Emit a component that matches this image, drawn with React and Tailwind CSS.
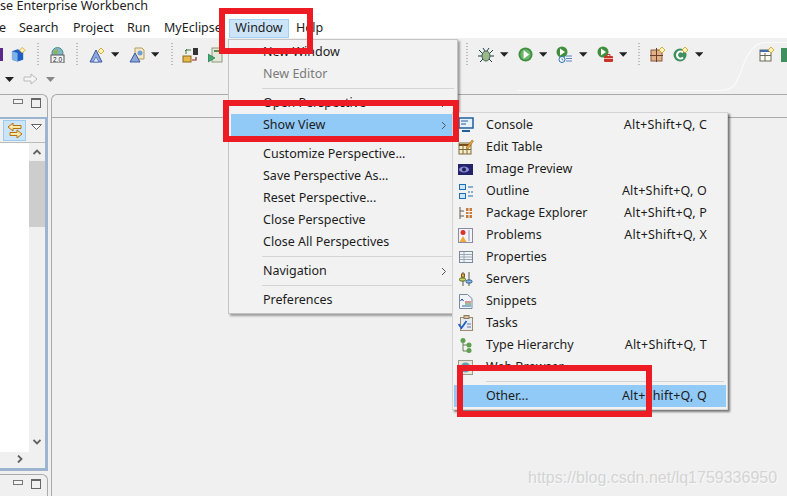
import React from 'react';

const Caret = ({ className = '', color = '#222' }) => (
  <svg width="9" height="5" viewBox="0 0 9 5" className={className}><path d="M0 0h9L4.5 5z" fill={color} /></svg>
);

const Dots = ({ className = '' }) => (
  <div className={`w-[2px] h-[24px] ${className}`} style={{ backgroundImage: 'linear-gradient(#bbb 50%, transparent 50%)', backgroundSize: '2px 3px' }} />
);

const PlayIcon = ({ size = 15 }) => (
  <svg width={size} height={size} viewBox="0 0 16 16">
    <circle cx="8" cy="8" r="7.5" fill="#3f8f3f" />
    <circle cx="8" cy="8" r="5.5" fill="#6cb56c" />
    <path d="M6 3.5L12 8l-6 4.5z" fill="#fff" />
  </svg>
);

const Star = ({ x = 11, y = 3 }) => (
  <path d={`M${x} ${y - 3}l3 3-3 3-3-3z`} fill="#fff4b8" stroke="#c99a1c" strokeWidth="0.8" />
);

const MountainIcon = () => (
  <svg width="17" height="16" viewBox="0 0 17 16">
    <path d="M1 15L7 3l6 12z" fill="#8fa7d8" stroke="#3a5aa5" />
    <path d="M4 15l3-5 3 5z" fill="#dfe7f7" stroke="#3a5aa5" strokeWidth="0.6" />
    <Star x={12} y={4} />
  </svg>
);

const MountainDocIcon = () => (
  <svg width="17" height="16" viewBox="0 0 17 16">
    <path d="M6 1h7l2 2v9H6z" fill="#f4e8c8" stroke="#b59a5a" />
    <circle cx="11" cy="6" r="2.5" fill="#6f9fd8" />
    <path d="M1 15L6 6l5 9z" fill="#8fa7d8" stroke="#3a5aa5" />
  </svg>
);

const icons = {
  cube: (
    <svg width="16" height="15" viewBox="0 0 16 15">
      <path d="M1 4l6-2 6 2v9l-6 2-6-2z" fill="#1f5fc4" />
      <path d="M1 4l6 2v9l-6-2z" fill="#7fb2e8" />
      <Star x={12} y={3} />
    </svg>
  ),
  globe: (
    <svg width="15" height="16" viewBox="0 0 15 16">
      <circle cx="7.5" cy="6" r="5.5" fill="#7fb6c8" stroke="#4f8a8a" />
      <path d="M3 4l4-2 2 3-4 3z" fill="#8cb45c" />
      <rect x="1" y="8" width="13" height="8" fill="#f4f4f4" stroke="#555" />
      <text x="7.5" y="14.5" fontSize="6.5" textAnchor="middle" fill="#222" fontFamily="Liberation Sans, sans-serif">2.0</text>
    </svg>
  ),
  deploy: (
    <svg width="17" height="16" viewBox="0 0 17 16">
      <rect x="11" y="1" width="5" height="7" fill="#333" />
      <path d="M4 7V3h5M5 2L3 4" fill="none" stroke="#3a7a3a" />
      <rect x="1" y="9" width="8" height="6" fill="#e8b84c" stroke="#8a6a1c" />
      <path d="M10 13h4v-3" fill="none" stroke="#8a2a1a" strokeWidth="1.2" />
    </svg>
  ),
  server: (
    <svg width="15" height="16" viewBox="0 0 15 16">
      <rect x="4" y="1" width="10" height="14" fill="#e4e8d8" stroke="#8a9a7a" />
      <rect x="6" y="3" width="6" height="2" fill="#5a8a4a" />
      <path d="M0 7l7 4-7 4z" fill="#3fa86f" stroke="#1f6a4a" strokeWidth="0.6" />
    </svg>
  ),
  bug: (
    <svg width="16" height="16" viewBox="0 0 16 16">
      <path d="M1 3l4 4M15 3l-4 4M0 9h4M12 9h4M2 15l3-3M14 15l-3-3M5 1l2 3M11 1L9 4" stroke="#1f3f3f" strokeWidth="1" />
      <ellipse cx="8" cy="9" rx="4" ry="5" fill="#9ab88a" stroke="#3f5f4f" />
    </svg>
  ),
  historyRun: (
    <svg width="17" height="17" viewBox="0 0 17 17">
      <circle cx="6" cy="6" r="5.5" fill="#3f8f3f" />
      <path d="M4 2.5L9 6l-5 3.5z" fill="#fff" />
      <circle cx="6" cy="13.5" r="3" fill="#fff" stroke="#1f6fb0" />
      <path d="M6 12v2h1.5" stroke="#1f6fb0" fill="none" strokeWidth="0.7" />
      <path d="M10 10h6M10 12.500h6M10 15h6" stroke="#5f86c4" />
    </svg>
  ),
  toolRun: (
    <svg width="17" height="17" viewBox="0 0 17 17">
      <circle cx="6" cy="6" r="5.5" fill="#3f8f3f" />
      <path d="M4 2.500L9 6l-5 3.500z" fill="#fff" />
      <rect x="7" y="10" width="9" height="6" rx="1" fill="#c8342c" />
      <path d="M10 10V8.500h3V10" fill="none" stroke="#c8342c" />
      <path d="M7 12.500h9" stroke="#f4b4a4" />
    </svg>
  ),
  newBox: (
    <svg width="16" height="15" viewBox="0 0 16 15">
      <rect x="1" y="3" width="11" height="11" fill="#dfb08a" stroke="#8a5a3a" />
      <path d="M6.500 1v14M0 8.500h13" stroke="#6a3f2a" />
      <Star x={12} y={3} />
    </svg>
  ),
  newC: (
    <svg width="16" height="15" viewBox="0 0 16 15">
      <circle cx="7" cy="8" r="6.500" fill="#3f8f5f" />
      <path d="M10 5.500A3.500 3.500 0 1 0 10 10.500" fill="none" stroke="#fff" strokeWidth="2" />
      <Star x={12} y={3} />
    </svg>
  ),
  table: (
    <svg width="16" height="15" viewBox="0 0 16 15">
      <rect x="1" y="3" width="11" height="11" fill="#fbfbf4" stroke="#6a6a5a" />
      <path d="M1 4h11" stroke="#3f6fb0" strokeWidth="2" />
      <path d="M1 8.500h11M6 6v8" stroke="#6a6a5a" />
      <Star x={12} y={3} />
    </svg>
  ),
};

const viewIcons = {
  console: (
    <svg width="16" height="16" viewBox="0 0 16 16">
      <rect x="1" y="1" width="14" height="10" fill="#e8f0f8" stroke="#1f5f9f" strokeWidth="1.5" />
      <path d="M3 4h7M3 7h5" stroke="#1f5f9f" />
      <path d="M4 14h8" stroke="#1f5f9f" strokeWidth="2" />
    </svg>
  ),
  editTable: (
    <svg width="16" height="16" viewBox="0 0 16 16">
      <rect x="1" y="4" width="12" height="11" fill="#f6ecc8" stroke="#7a6a3a" />
      <path d="M1 6h12" stroke="#7a4a1a" strokeWidth="2" />
      <path d="M1 10.500h12M5 6v9M9 6v9" stroke="#7a6a3a" />
      <path d="M8 9l6-8 1.500 1L10 10z" fill="#e8a83c" stroke="#8a5a1a" strokeWidth="0.5" />
    </svg>
  ),
  image: (
    <svg width="15" height="11" viewBox="0 0 15 11">
      <rect width="15" height="11" fill="#23236b" />
      <ellipse cx="6" cy="5.500" rx="5" ry="3" fill="#8c8cd8" />
      <circle cx="6" cy="5.500" r="2" fill="#20204f" />
    </svg>
  ),
  outline: (
    <svg width="14" height="15" viewBox="0 0 14 15">
      <rect x="0.500" y="0.500" width="6" height="5" fill="#cfe4f6" stroke="#1f6fb0" />
      <rect x="0.500" y="9.500" width="6" height="5" fill="#cfe4f6" stroke="#1f6fb0" />
      <path d="M9 3h5M9 8h2M12 8h2M9 12h5" stroke="#1f6fb0" />
    </svg>
  ),
  pkg: (
    <svg width="14" height="14" viewBox="0 0 14 14">
      <path d="M1 1v12M1 5h4M1 10h4" stroke="#5f5f4f" />
      <rect x="7" y="2" width="6" height="10" fill="#c87a3c" />
      <path d="M7 5.500h6M7 8.500h6M10 2v10" stroke="#f4f4f4" />
    </svg>
  ),
  problems: (
    <svg width="15" height="15" viewBox="0 0 15 15">
      <rect x="0.500" y="0.500" width="14" height="14" fill="#f4f4f8" stroke="#8a8aa0" />
      <circle cx="5" cy="4.500" r="2.500" fill="#d8342c" />
      <path d="M5 8l3.500 6h-7z" fill="#eea83c" />
      <path d="M11 2v11" stroke="#c4c4d8" strokeWidth="2" />
    </svg>
  ),
  properties: (
    <svg width="14" height="12" viewBox="0 0 14 12">
      <rect x="0.500" y="0.500" width="13" height="11" fill="#f4f4f4" stroke="#7a8a9a" />
      <path d="M1 3.500h12M1 6h12M1 8.500h12M5 1v10" stroke="#9aa8b8" />
    </svg>
  ),
  servers: (
    <svg width="14" height="14" viewBox="0 0 14 14">
      <path d="M4 0v14M10 0v14" stroke="#5a5a4a" />
      <rect x="0.500" y="6" width="6" height="3" rx="1.500" fill="#c8d858" stroke="#5a6a2a" />
      <rect x="7" y="8" width="6" height="3" rx="1.500" fill="#8ab8e8" stroke="#2a5a8a" />
      <rect x="2.500" y="2" width="3" height="3" fill="#e8b84c" stroke="#7a5a1a" />
    </svg>
  ),
  snippets: (
    <svg width="14" height="15" viewBox="0 0 14 15">
      <path d="M0.500 0.500h8l4.500 4v10h-12.500z" fill="#f0f4fa" stroke="#7a8aa0" />
      <path d="M3 5l-1.500 2M3 5l1.500 2" stroke="#1f3f8f" />
      <path d="M6 8h6" stroke="#c8342c" />
      <path d="M6 10h6" stroke="#3f8f3f" />
      <path d="M3 12h9" stroke="#1f6fb0" />
    </svg>
  ),
  tasks: (
    <svg width="15" height="16" viewBox="0 0 15 16">
      <rect x="2.500" y="2.500" width="12" height="13" fill="#e4ebf4" stroke="#a08a6a" />
      <rect x="6" y="0.500" width="5" height="3" fill="#d4c0a4" stroke="#8a7a5a" />
      <path d="M0.500 9l3 4 5-7" fill="none" stroke="#1f5fc4" strokeWidth="1.800" />
      <path d="M9 9h4M9 12h4" stroke="#6a7a9a" />
    </svg>
  ),
  hierarchy: (
    <svg width="12" height="15" viewBox="0 0 12 15">
      <path d="M3 3v10h5M3 7h5" stroke="#6a7a5a" fill="none" />
      <circle cx="3" cy="2.500" r="2.500" fill="#5fa04f" />
      <circle cx="9" cy="7" r="2.500" fill="#5fa04f" />
      <circle cx="9" cy="12.500" r="2.500" fill="#5fa04f" />
    </svg>
  ),
  web: (
    <svg width="15" height="15" viewBox="0 0 15 15">
      <rect x="0.500" y="0.500" width="14" height="14" fill="#e8e8d8" stroke="#9a9a8a" />
      <circle cx="7.500" cy="7.500" r="5" fill="#5f9fc4" />
      <path d="M4 5l4-1 1 3-3 3z" fill="#5f9f5f" />
    </svg>
  ),
};

const windowItems = [
  { label: 'New Window' },
  { label: 'New Editor', disabled: true },
  { sep: true },
  { label: 'Open Perspective', arrow: true },
  { label: 'Show View', arrow: true, active: true },
  { sep: true, faint: true },
  { label: 'Customize Perspective...' },
  { label: 'Save Perspective As...' },
  { label: 'Reset Perspective...' },
  { label: 'Close Perspective' },
  { label: 'Close All Perspectives' },
  { sep: true },
  { label: 'Navigation', arrow: true },
  { sep: true },
  { label: 'Preferences' },
];

const viewItems = [
  { icon: 'console', label: 'Console', key: 'Alt+Shift+Q, C' },
  { icon: 'editTable', label: 'Edit Table' },
  { icon: 'image', label: 'Image Preview' },
  { icon: 'outline', label: 'Outline', key: 'Alt+Shift+Q, O' },
  { icon: 'pkg', label: 'Package Explorer', key: 'Alt+Shift+Q, P' },
  { icon: 'problems', label: 'Problems', key: 'Alt+Shift+Q, X' },
  { icon: 'properties', label: 'Properties' },
  { icon: 'servers', label: 'Servers' },
  { icon: 'snippets', label: 'Snippets' },
  { icon: 'tasks', label: 'Tasks' },
  { icon: 'hierarchy', label: 'Type Hierarchy', key: 'Alt+Shift+Q, T' },
  { icon: 'web', label: 'Web Browser' },
];

const Chevron = () => (
  <svg width="6" height="9" viewBox="0 0 6 9" className="absolute right-[8px] top-[7px]">
    <path d="M1 1l3.500 3.500L1 8" fill="none" stroke="#555" strokeWidth="1" />
  </svg>
);

const PanelControls = () => (
  <div className="flex items-start">
    <div className="w-[10px] h-[5px] border border-[#777] bg-[#f4f4f4] mt-[1px]" />
    <div className="w-[10px] h-[10px] border border-[#666] border-t-[2px] ml-[8px]" />
  </div>
);

export default function App() {
  return (
    <div className="relative w-[787px] h-[496px] overflow-hidden flex flex-col bg-[#f0f0f0] text-[12.5px] text-[#1c1c1c] font-['Noto_Sans',sans-serif]">
      {/* Title + menu bar */}
      <div className="h-[15px] bg-white text-[12.6px] leading-[12px] whitespace-nowrap text-[#222]">
        <span className="block">se Enterprise Workbench</span>
      </div>
      <div className="h-[23px] bg-white flex items-center whitespace-nowrap pt-[4px]">
        <span className="w-[20px] -ml-[1px]">e</span>
        <span className="w-[54px]">Search</span>
        <span className="w-[54px]">Project</span>
        <span className="w-[37px]">Run</span>
        <span className="w-[65px]">MyEclipse</span>
        <span className="w-[60px] h-[19px] bg-[#cce4f7] border border-[#a3d2f5] flex items-center justify-center">Window</span>
        <span className="ml-[7px]">Help</span>
      </div>

      {/* Toolbar */}
      <div className="relative h-[56px] shrink-0 bg-[#f0f0f0]">
        <svg width="270" height="56" viewBox="0 0 270 56" className="absolute right-0 top-0">
          <path d="M0 52.500h200c14 0 18-4 22-14 4-10 10-34 26-34h22" fill="none" stroke="#fafafa" strokeWidth="1.200" />
        </svg>
        <div className="relative flex items-center h-[28px] pt-[5px]">
          <div className="w-[3px] h-[13px] bg-[#5a2a8a] mr-[8px]" />
          {icons.cube}
          <Dots className="ml-[11px]" />
          <div className="ml-[11px]">{icons.globe}</div>
          <Dots className="ml-[11px]" />
          <div className="ml-[11px]"><MountainIcon /></div>
          <Caret className="ml-[5px]" />
          <div className="ml-[10px]"><MountainDocIcon /></div>
          <Caret className="ml-[5px]" />
          <Dots className="ml-[12px]" />
          <div className="ml-[9px]">{icons.deploy}</div>
          <div className="ml-[9px]">{icons.server}</div>
          <Dots className="ml-[243px]" />
          <div className="ml-[10px]">{icons.bug}</div>
          <Caret className="ml-[6px]" />
          <div className="ml-[9px]"><PlayIcon /></div>
          <Caret className="ml-[6px]" />
          <div className="ml-[9px]">{icons.historyRun}</div>
          <Caret className="ml-[6px]" />
          <div className="ml-[9px]">{icons.toolRun}</div>
          <Caret className="ml-[5px]" />
          <Dots className="ml-[11px]" />
          <div className="ml-[10px]">{icons.newBox}</div>
          <div className="ml-[7px]">{icons.newC}</div>
          <Caret className="ml-[6px]" />
          <div className="ml-[56px]">{icons.table}</div>
          <div className="w-[6px] h-[14px] bg-[#3f8f5f] ml-[6px]" />
        </div>
        <div className="relative flex items-center h-[22px] mt-[2px]">
          <Caret className="ml-[5px]" />
          <svg width="15" height="12" viewBox="0 0 15 12" className="ml-[9px]">
            <path d="M1 4h7V1l6 5-6 5V8H1z" fill="#f4f4f4" stroke="#bbb" />
          </svg>
          <Caret className="ml-[8px]" color="#888" />
        </div>
      </div>

      {/* Body: left view stack + editor area */}
      <div className="flex-1 flex min-h-0">
        <div className="w-[48px] shrink-0 flex flex-col">
          <div className="h-[23px] border-t border-r border-[#aaa] rounded-tr-[6px] flex justify-end pt-[3px] pr-[6px]">
            <PanelControls />
          </div>
          <div className="h-[354px] border-t-[2px] border-r-[3px] border-b-[3px] border-[#9db4d0] flex flex-col">
            <div className="h-[24px] border-b border-[#bbb] flex pl-[3px] pt-[1px] shrink-0">
              <div className="w-[23px] h-[21px] bg-[#cce4f7] border border-[#99ccf3] flex items-center justify-center">
                <svg width="16" height="17" viewBox="0 0 16 17">
                  <path d="M1 5l5-4v2.500h8v3H6V9z" fill="#fde8a8" stroke="#b8720c" />
                  <path d="M15 12l-5-4v2.500H3v3h7V16z" fill="#fde8a8" stroke="#b8720c" />
                </svg>
              </div>
              <svg width="11" height="6" viewBox="0 0 11 6" className="ml-[5px] mt-[4px]">
                <path d="M0.500 0.500h10L5.500 5.500z" fill="#fff" stroke="#666" />
              </svg>
            </div>
            <div className="flex-1 flex min-h-0">
              <div className="w-[29px] h-[309px] bg-white shrink-0" />
              <div className="flex-1 flex flex-col items-stretch">
                <div className="h-[18px] flex items-center justify-center">
                  <svg width="8" height="6" viewBox="0 0 8 6"><path d="M0.500 5L4 1.500 7.500 5" fill="none" stroke="#606060" strokeWidth="1.800" /></svg>
                </div>
                <div className="h-[66px] bg-[#cdcdcd]" />
                <div className="flex-1" />
                <div className="h-[22px] flex items-center justify-center">
                  <svg width="8" height="6" viewBox="0 0 8 6"><path d="M0.500 1L4 4.500 7.500 1" fill="none" stroke="#606060" strokeWidth="1.800" /></svg>
                </div>
              </div>
            </div>
            <div className="h-[15px] shrink-0 pl-[17px] pt-[2px]">
              <svg width="6" height="8" viewBox="0 0 6 8"><path d="M1 0.500L4.500 4 1 7.500" fill="none" stroke="#606060" strokeWidth="1.800" /></svg>
            </div>
          </div>
          <div className="mt-[3px] flex-1 border-t border-r border-[#aaa] rounded-tr-[6px] flex justify-end pt-[4px] pr-[6px]">
            <PanelControls />
          </div>
        </div>
        <div className="ml-[3px] flex-1 border-t border-l border-[#aaa] rounded-tl-[6px]">
          <div className="h-[23px] border-b border-[#aaa]" />
        </div>
      </div>

      {/* Window menu */}
      <div className="absolute left-[228px] top-[39px] w-[230px] h-[275px] bg-[#f2f2f2] border border-[#c4c4c4] shadow-[2px_2px_2px_rgba(0,0,0,0.35)] px-[1px] pt-[1px]">
        {windowItems.map((item, i) =>
          item.sep ? (
            <div key={i} className={item.faint ? 'h-[7px]' : 'h-[7px] flex items-center pl-[32px] pr-[2px]'}>
              {!item.faint && <div className="h-px w-full bg-[#d4d4d4]" />}
            </div>
          ) : (
            <div
              key={i}
              className={`relative h-[22px] mx-[1px] pl-[32px] flex items-center whitespace-nowrap ${item.active ? 'bg-[#91c9f7]' : ''} ${item.disabled ? 'text-[#7a7a7a]' : ''}`}
            >
              {item.label}
              {item.arrow && <Chevron />}
            </div>
          )
        )}
      </div>

      {/* Show View submenu */}
      <div className="absolute left-[452px] top-[112px] w-[276px] h-[298px] bg-[#f2f2f2] border border-[#d4d4d4] shadow-[2px_2px_2px_rgba(0,0,0,0.5)] px-[1px] pt-[1px]">
        {viewItems.map((item) => (
          <div key={item.label} className="flex items-center h-[22px] whitespace-nowrap">
            <div className="w-[32px] shrink-0">
              <div className="w-[23px] flex justify-center">{viewIcons[item.icon]}</div>
            </div>
            <span>{item.label}</span>
            {item.key && <span className="ml-auto mr-[19px] tracking-[0.2px]">{item.key}</span>}
          </div>
        ))}
        <div className="h-[7px] flex items-center pl-[32px] pr-[2px]"><div className="h-px w-full bg-[#d4d4d4]" /></div>
        <div className="flex items-center h-[22px] pl-[32px] bg-[#91c9f7] whitespace-nowrap">
          <span>Other...</span>
          <span className="ml-auto mr-[19px] tracking-[0.2px]">Alt+Shift+Q, Q</span>
        </div>
      </div>

      {/* Red annotation boxes */}
      <div className="absolute left-[219px] top-[8px] w-[94px] h-[46px] border-[6px] border-[#ed1c24]" />
      <div className="absolute left-[223px] top-[100px] w-[236px] h-[42px] border-[6px] border-[#ed1c24]" />
      <div className="absolute left-[457px] top-[365px] w-[195px] h-[52px] border-[6px] border-[#ed1c24]" />

      {/* Watermark */}
      <div className="absolute left-[528px] top-[469px] text-[16px] leading-[18px] text-[#d4d4d4] font-['Liberation_Sans',sans-serif] whitespace-nowrap [text-shadow:1px_1px_1px_#fafafa]">
        https://blog.csdn.net/lq1759336950
      </div>
    </div>
  );
}
